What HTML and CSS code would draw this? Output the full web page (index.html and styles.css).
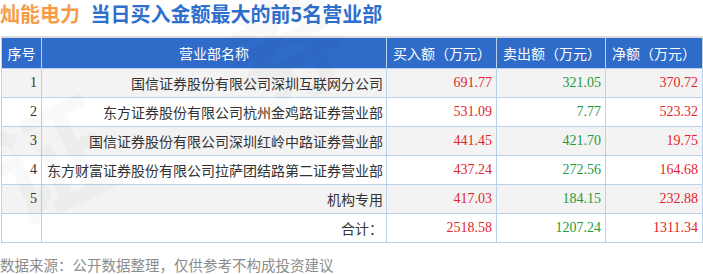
FILE: index.html
```html
<!DOCTYPE html>
<html lang="zh-CN">
<head>
    <meta charset="UTF-8">
    <meta name="viewport" content="width=device-width, initial-scale=1.0">
    <title>灿能电力 当日买入金额最大的前5名营业部</title>
    <link rel="stylesheet" href="styles.css">
</head>
<body>
    <!-- Title -->
    <h1 class="title">
        <span class="stock">灿能电力</span>
        <span class="caption">当日买入金额最大的前5名营业部</span>
    </h1>

    <!-- Ranking table -->
    <table class="rank-table">
        <colgroup>
            <col class="w-no">
            <col class="w-name">
            <col class="w-buy">
            <col class="w-sell">
            <col class="w-net">
        </colgroup>
        <thead>
            <tr>
                <th class="center">序号</th>
                <th class="center">营业部名称</th>
                <th>买入额（万元）</th>
                <th>卖出额（万元）</th>
                <th>净额（万元）</th>
            </tr>
        </thead>
        <tbody>
            <tr>
                <td class="no">1</td>
                <td class="name">国信证券股份有限公司深圳互联网分公司</td>
                <td class="up">691.77</td>
                <td class="down">321.05</td>
                <td class="up">370.72</td>
            </tr>
            <tr>
                <td class="no">2</td>
                <td class="name">东方证券股份有限公司杭州金鸡路证券营业部</td>
                <td class="up">531.09</td>
                <td class="down">7.77</td>
                <td class="up">523.32</td>
            </tr>
            <tr>
                <td class="no">3</td>
                <td class="name">国信证券股份有限公司深圳红岭中路证券营业部</td>
                <td class="up">441.45</td>
                <td class="down">421.70</td>
                <td class="up">19.75</td>
            </tr>
            <tr>
                <td class="no">4</td>
                <td class="name">东方财富证券股份有限公司拉萨团结路第二证券营业部</td>
                <td class="up">437.24</td>
                <td class="down">272.56</td>
                <td class="up">164.68</td>
            </tr>
            <tr>
                <td class="no">5</td>
                <td class="name">机构专用</td>
                <td class="up">417.03</td>
                <td class="down">184.15</td>
                <td class="up">232.88</td>
            </tr>
            <tr>
                <td class="no"></td>
                <td class="name">合计：</td>
                <td class="up">2518.58</td>
                <td class="down">1207.24</td>
                <td class="up">1311.34</td>
            </tr>
        </tbody>
    </table>

    <p class="source">数据来源：公开数据整理，仅供参考不构成投资建议</p>

    <!-- faint watermark over the table -->
    <div class="watermark">证券</div>
</body>
</html>
```

FILE: styles.css
```css
html {
    overflow: hidden;
}

body {
    margin: 0;
    padding: 0 0 0 1px;
    width: 702px;
    height: 274px;
    overflow: hidden;
    position: relative;
    background: #fff;
    font-family: "Noto Sans CJK SC", sans-serif;
}

/* Title line */
.title {
    margin: 0 0 0 -1px;
    height: 36px;
    line-height: 28px;
    font-size: 20px;
    font-weight: bold;
    white-space: nowrap;
}

.stock {
    color: #f79b48;
    margin-right: 6px;
}

.caption {
    color: #2f6fcd;
}

/* Table */
.rank-table {
    width: 701px;
    border-collapse: collapse;
    table-layout: fixed;
    border-top: 2px solid #dcdcdc;
    font-size: 14px;
}

.w-no { width: 40px; }
.w-name { width: 345px; }
.w-buy { width: 110px; }
.w-sell { width: 109px; }
.w-net { width: 97px; }

.rank-table th {
    background: #2f6bc9;
    color: #fff;
    font-weight: normal;
    height: 30px;
    padding: 0 0 0 6px;
    border: 1px solid #b9d1ea;
    border-top: none;
    text-align: left;
    white-space: nowrap;
    overflow: hidden;
}

.rank-table th.center {
    text-align: center;
    padding: 0;
}

.rank-table td {
    height: 28px;
    padding: 0 4px 0 0;
    border: 1px solid #b9d1ea;
    text-align: right;
    font-family: "Liberation Serif", "Noto Sans CJK SC", serif;
    white-space: nowrap;
    overflow: hidden;
    color: #333;
}

.rank-table td.name {
    font-family: "Noto Sans CJK SC", sans-serif;
    padding-right: 3px;
}

.rank-table tbody tr:nth-child(odd) td {
    background: #f3f3f3;
}

.rank-table td.up {
    color: #e0262c;
}

.rank-table td.down {
    color: #1f9b41;
}

/* Source note */
.source {
    margin: 14px 0 0 -1px;
    font-size: 14.5px;
    color: #8c8c8c;
    line-height: 16px;
    white-space: nowrap;
}

/* Watermark */
.watermark {
    position: absolute;
    left: 20px;
    bottom: 40px;
    font-size: 120px;
    line-height: 1;
    font-weight: bold;
    color: rgba(0, 0, 0, 0.025);
    transform: rotate(-25deg);
    transform-origin: left bottom;
    white-space: nowrap;
    pointer-events: none;
    letter-spacing: 140px;
}
```
